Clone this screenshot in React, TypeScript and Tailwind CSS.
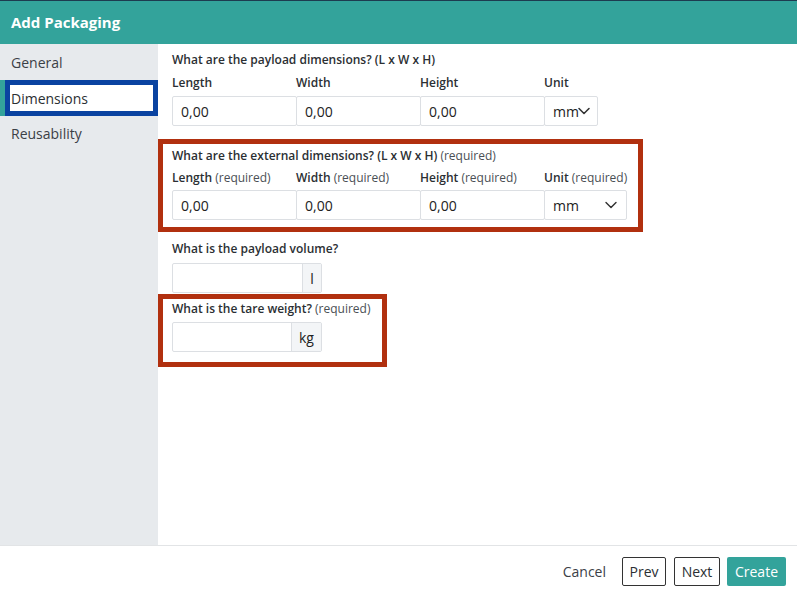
import { ChevronDown } from 'lucide-react'

const font = { fontFamily: '"Open Sans", "Liberation Sans", sans-serif' }

function Label({ text, required }: { text: string; required?: boolean }) {
  return (
    <div className="text-[12px] leading-[18px] font-semibold text-[#2b2f33] whitespace-nowrap">
      {text}
      {required && <span className="font-normal text-[#4a4f55]"> (required)</span>}
    </div>
  )
}

function NumberInput({ value, width }: { value: string; width: string }) {
  return (
    <div
      className={`${width} h-[30px] -mr-px border border-[#dcdfe3] rounded-[2px] bg-white flex items-center pl-[8px] text-[14px] text-[#222]`}
    >
      {value}
    </div>
  )
}

function DimensionRow({ required }: { required?: boolean }) {
  const cols = required
    ? 'grid grid-cols-[124px_124px_124px_83px]'
    : 'grid grid-cols-[124px_124px_124px_54px]'
  return (
    <>
      <div className={cols}>
        <Label text="Length" required={required} />
        <Label text="Width" required={required} />
        <Label text="Height" required={required} />
        <Label text="Unit" required={required} />
      </div>
      <div className={`${cols} ${required ? 'mt-[3px]' : 'mt-[4px]'}`}>
        <NumberInput value="0,00" width="w-[125px]" />
        <NumberInput value="0,00" width="w-[125px]" />
        <NumberInput value="0,00" width="w-[125px]" />
        {required ? (
          <div className="w-[83px] h-[30px] border border-[#dcdfe3] rounded-[2px] flex items-center justify-between pl-[8px] pr-[5px] text-[14px] text-[#222]">
            mm
            <ChevronDown size={20} strokeWidth={1.7} className="text-[#333]" />
          </div>
        ) : (
          <div className="w-[54px] h-[30px] border border-[#dcdfe3] rounded-[2px] flex items-center pl-[8px] text-[14px] text-[#222]">
            mm
            <ChevronDown size={20} strokeWidth={1.9} className="text-[#333] -ml-[5px]" />
          </div>
        )}
      </div>
    </>
  )
}

function AddonInput({ unit, addonWidth }: { unit: string; addonWidth: string }) {
  return (
    <div className="flex w-[150px] h-[30px] border border-[#dcdfe3] rounded-[2px] bg-white">
      <div className="flex-1" />
      <div
        className={`${addonWidth} border-l border-[#dcdfe3] bg-[#f3f5f7] flex items-center justify-center text-[14px] text-[#222]`}
      >
        {unit}
      </div>
    </div>
  )
}

function SideItem({ name, active }: { name: string; active?: boolean }) {
  if (active) {
    return (
      <div className="relative h-[36px] pl-[5px]">
        <div className="absolute left-0 top-0 w-[5px] h-full bg-[#33a39b]" />
        <div className="h-full bg-white border-[5px] border-[#0a43a1] flex items-center pl-[1px] text-[14px] text-[#2b2f33]">
          {name}
        </div>
      </div>
    )
  }
  return (
    <div className="h-[35px] flex items-center pl-[11px] text-[14px] text-[#3b4046]">{name}</div>
  )
}

export default function App() {
  return (
    <div className="w-[797px] h-[597px] flex flex-col bg-white" style={font}>
      <div className="h-[44px] shrink-0 bg-[#33a39b] border-t border-[#1d3b50] flex items-center pl-[11px]">
        <span className="text-white font-bold text-[15px]">Add Packaging</span>
      </div>

      <div className="flex-1 flex min-h-0">
        <div className="w-[158px] shrink-0 bg-[#e7eaed] pt-[1px]">
          <SideItem name="General" />
          <SideItem name="Dimensions" active />
          <SideItem name="Reusability" />
        </div>

        <div className="flex-1 pl-[14px] pt-[7px]">
          <Label text="What are the payload dimensions? (L x W x H)" />
          <div className="mt-[5px]">
            <DimensionRow />
          </div>

          <div className="mt-[13px] -ml-[14px] w-[485px] border-[5px] border-[#b1300f] pl-[9px] pt-[3px] pb-[7px]">
            <Label text="What are the external dimensions? (L x W x H)" required />
            <div className="mt-[4px]">
              <DimensionRow required />
            </div>
          </div>

          <div className="mt-[8px]">
            <Label text="What is the payload volume?" />
            <div className="mt-[5px]">
              <AddonInput unit="l" addonWidth="w-[19px]" />
            </div>
          </div>

          <div className="mt-[1px] -ml-[14px] w-[229px] border-[5px] border-[#b1300f] pl-[9px] pt-[1px] pb-[10px]">
            <Label text="What is the tare weight?" required />
            <div className="mt-[4px]">
              <AddonInput unit="kg" addonWidth="w-[30px]" />
            </div>
          </div>
        </div>
      </div>

      <div className="h-[52px] shrink-0 border-t border-[#e2e4e6] flex items-center justify-end pr-[11px] text-[14px]">
        <span className="text-[#3b4046] mr-[16px]">Cancel</span>
        <button className="h-[29px] w-[44px] border border-[#333] rounded-[2px] text-[#2b2f33]">Prev</button>
        <button className="h-[29px] w-[46px] ml-[8px] border border-[#333] rounded-[2px] text-[#2b2f33]">Next</button>
        <button className="h-[29px] w-[59px] ml-[7px] bg-[#33a39b] rounded-[2px] text-white">Create</button>
      </div>
    </div>
  )
}
